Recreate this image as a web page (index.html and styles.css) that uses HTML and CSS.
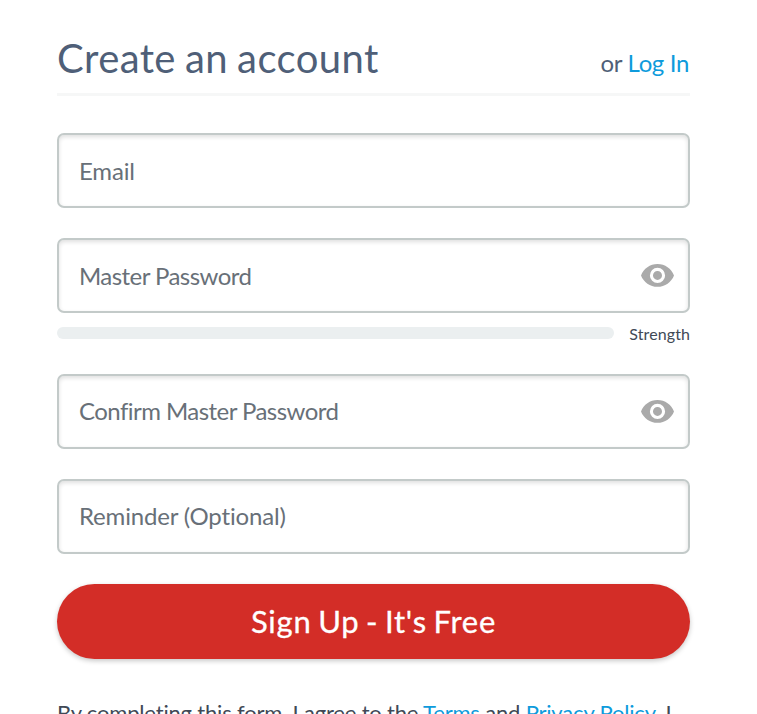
FILE: index.html
```html
<!DOCTYPE html>
<html lang="en">
<head>
<meta charset="utf-8">
<title>Create an account</title>
<link rel="stylesheet" href="styles.css">
</head>
<body>
<main class="signup">
  <header class="head">
    <h1 class="title">Create an account</h1>
    <p class="login">or <a href="#">Log In</a></p>
  </header>
  <form class="form">
    <div class="field"><label class="email">Email</label></div>
    <div class="field">
      <label class="master">Master Password</label>
      <svg class="eye" viewBox="0 0 33 23"><path fill="#aaa" fill-rule="evenodd" d="M16.500 0C9 0 2.600 4.700 0 11.400c2.600 6.700 9 11.400 16.500 11.400S30.400 18.100 33 11.400C30.400 4.700 24 0 16.500 0zm0 19a7.600 7.600 0 1 1 0-15.200 7.600 7.600 0 0 1 0 15.200zm0-12.100a4.500 4.500 0 1 0 0 9 4.500 4.500 0 0 0 0-9z"/></svg>
    </div>
    <div class="meter"><div class="bar"></div><span class="strength">Strength</span></div>
    <div class="field">
      <label class="confirm">Confirm Master Password</label>
      <svg class="eye" viewBox="0 0 33 23"><path fill="#aaa" fill-rule="evenodd" d="M16.500 0C9 0 2.600 4.700 0 11.400c2.600 6.700 9 11.400 16.500 11.400S30.400 18.100 33 11.400C30.400 4.700 24 0 16.500 0zm0 19a7.600 7.600 0 1 1 0-15.200 7.600 7.600 0 0 1 0 15.200zm0-12.100a4.500 4.500 0 1 0 0 9 4.500 4.500 0 0 0 0-9z"/></svg>
    </div>
    <div class="field"><label class="reminder">Reminder (Optional)</label></div>
    <button class="submit" type="button">Sign Up - It's Free</button>
  </form>
  <p class="terms">By completing this form, I agree to the <a href="#">Terms</a> and <a href="#">Privacy Policy</a>. I</p>
</main>
</body>
</html>
```
FILE: styles.css
```css
* { box-sizing: border-box; }
html { overflow: hidden; }
body {
  margin: 0;
  height: 714px;
  overflow: hidden;
  background: #fff;
  color: #414956;
  font-family: Lato, "Liberation Sans", sans-serif;
}
a { color: #0e9bdc; text-decoration: none; }
.signup { width: 633px; margin-left: 57px; }
.head {
  display: flex;
  justify-content: space-between;
  align-items: flex-start;
  height: 96px;
  padding-top: 34px;
  border-bottom: 3px solid #f6f7f7;
  color: #4f5f78;
}
.title { margin: 0; font-size: 40px; line-height: 48px; font-weight: 400; letter-spacing: .4px; word-spacing: -1.5px; white-space: nowrap; }
.login { margin: 14px 1px 0 0; font-size: 24px; line-height: 30px; letter-spacing: -.35px; white-space: nowrap; }
.form { display: flex; flex-direction: column; padding-top: 37px; }
.field {
  display: flex;
  align-items: center;
  justify-content: space-between;
  height: 75px;
  margin-bottom: 30px;
  padding: 0 14.500px 0 20px;
  border: 2px solid #c3cac9;
  border-radius: 7px;
  box-shadow: inset 0 2px 4px rgba(0, 0, 0, .13);
  color: #687078;
  font-size: 24px;
  line-height: 30px;
  letter-spacing: -.55px;
  white-space: nowrap;
}
.field .email { letter-spacing: -.15px; }
.field .reminder { letter-spacing: -.17px; }
.field .confirm, .field .reminder { padding-bottom: 2px; }
.eye { width: 33px; height: 23px; }
.meter { display: flex; justify-content: space-between; height: 12px; margin: -16px 0 35px; }
.bar { width: 557px; height: 12px; border-radius: 6px; background: #ebeff0; }
.strength { margin-top: -2px; font-size: 16px; line-height: 18px; letter-spacing: .1px; }
.submit {
  height: 75px;
  padding: 0 0 2px;
  border: 0;
  border-radius: 38px;
  background: #d32d27;
  box-shadow: 0 2px 5px rgba(0, 0, 0, .22);
  color: #fff;
  font: 400 31px/40px Lato, "Liberation Sans", sans-serif;
  letter-spacing: .75px;
  word-spacing: -2px;
  -webkit-text-stroke: .3px #fff;
}
.terms { margin: 39px 0 0; font-size: 22px; line-height: 30px; letter-spacing: -.18px; white-space: nowrap; }
```
